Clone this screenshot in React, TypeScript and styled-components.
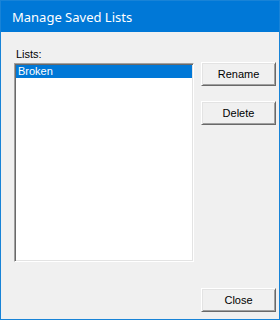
import styled, { createGlobalStyle } from 'styled-components';

const c_title_blue = '#0078d7';
const c_frame = '#1883d7';
const c_face = '#f0f0f0';
const c_shadow = '#a0a0a0';
const c_dark_shadow = '#696969';
const c_light = '#e3e3e3';
const c_highlight = '#0078d7';

const t_ui_font = '"Liberation Sans", Arial, sans-serif';
const t_title_font = '"Segoe UI", "Noto Sans", sans-serif';

const GlobalStyle = createGlobalStyle`
  html, body {
    margin: 0;
    padding: 0;
    background: ${c_face};
  }
  * {
    box-sizing: border-box;
  }
`;

const Window = styled.div`
  width: 280px;
  height: 320px;
  border: 1px solid ${c_frame};
  background: ${c_face};
  display: flex;
  flex-direction: column;
  font-family: ${t_ui_font};
  font-size: 11px;
  color: #000;
`;

const TitleBar = styled.div`
  height: 31px;
  flex: none;
  background: ${c_title_blue};
  display: flex;
  align-items: center;
  padding-left: 11px;
`;

const Title = styled.span`
  font-family: ${t_title_font};
  font-size: 13px;
  color: #fff;
  padding-top: 1px;
`;

const Body = styled.div`
  flex: 1;
  display: flex;
  padding: 14px 3px 7px 13px;
`;

const LeftColumn = styled.div`
  width: 180px;
  display: flex;
  flex-direction: column;
`;

const Label = styled.div`
  height: 17px;
  line-height: 13px;
  padding-left: 2px;
  padding-top: 2px;
`;

const ListBox = styled.div`
  height: 199px;
  background: #fff;
  border-style: solid;
  border-width: 1px;
  border-color: ${c_shadow} #fff #fff ${c_shadow};
  box-shadow: inset 1px 1px 0 ${c_dark_shadow}, inset -1px -1px 0 ${c_light};
  padding: 1px;
`;

const ListItem = styled.div<{ selected?: boolean }>`
  height: 13px;
  line-height: 13px;
  padding-left: 2px;
  background: ${(props) => (props.selected ? c_highlight : 'transparent')};
  color: ${(props) => (props.selected ? '#fff' : '#000')};
`;

const RightColumn = styled.div`
  margin-left: 7px;
  padding-top: 16px;
  display: flex;
  flex-direction: column;
  gap: 15px;
`;

const Button = styled.button<{ bottom?: boolean }>`
  width: 75px;
  height: 24px;
  margin-top: ${(props) => (props.bottom ? 'auto' : '0')};
  padding: 0;
  font-family: ${t_ui_font};
  font-size: 11px;
  color: #000;
  background: ${c_face};
  border-style: solid;
  border-width: 1px;
  border-color: #fff ${c_dark_shadow} ${c_dark_shadow} #fff;
  box-shadow: inset 1px 1px 0 ${c_light}, inset -1px -1px 0 ${c_shadow};
  border-radius: 0;
`;

export default function App() {
  return (
    <>
      <GlobalStyle />
      <Window>
        <TitleBar>
          <Title>Manage Saved Lists</Title>
        </TitleBar>
        <Body>
          <LeftColumn>
            <Label>Lists:</Label>
            <ListBox>
              <ListItem selected>Broken</ListItem>
            </ListBox>
          </LeftColumn>
          <RightColumn>
            <Button>Rename</Button>
            <Button>Delete</Button>
            <Button bottom>Close</Button>
          </RightColumn>
        </Body>
      </Window>
    </>
  );
}
